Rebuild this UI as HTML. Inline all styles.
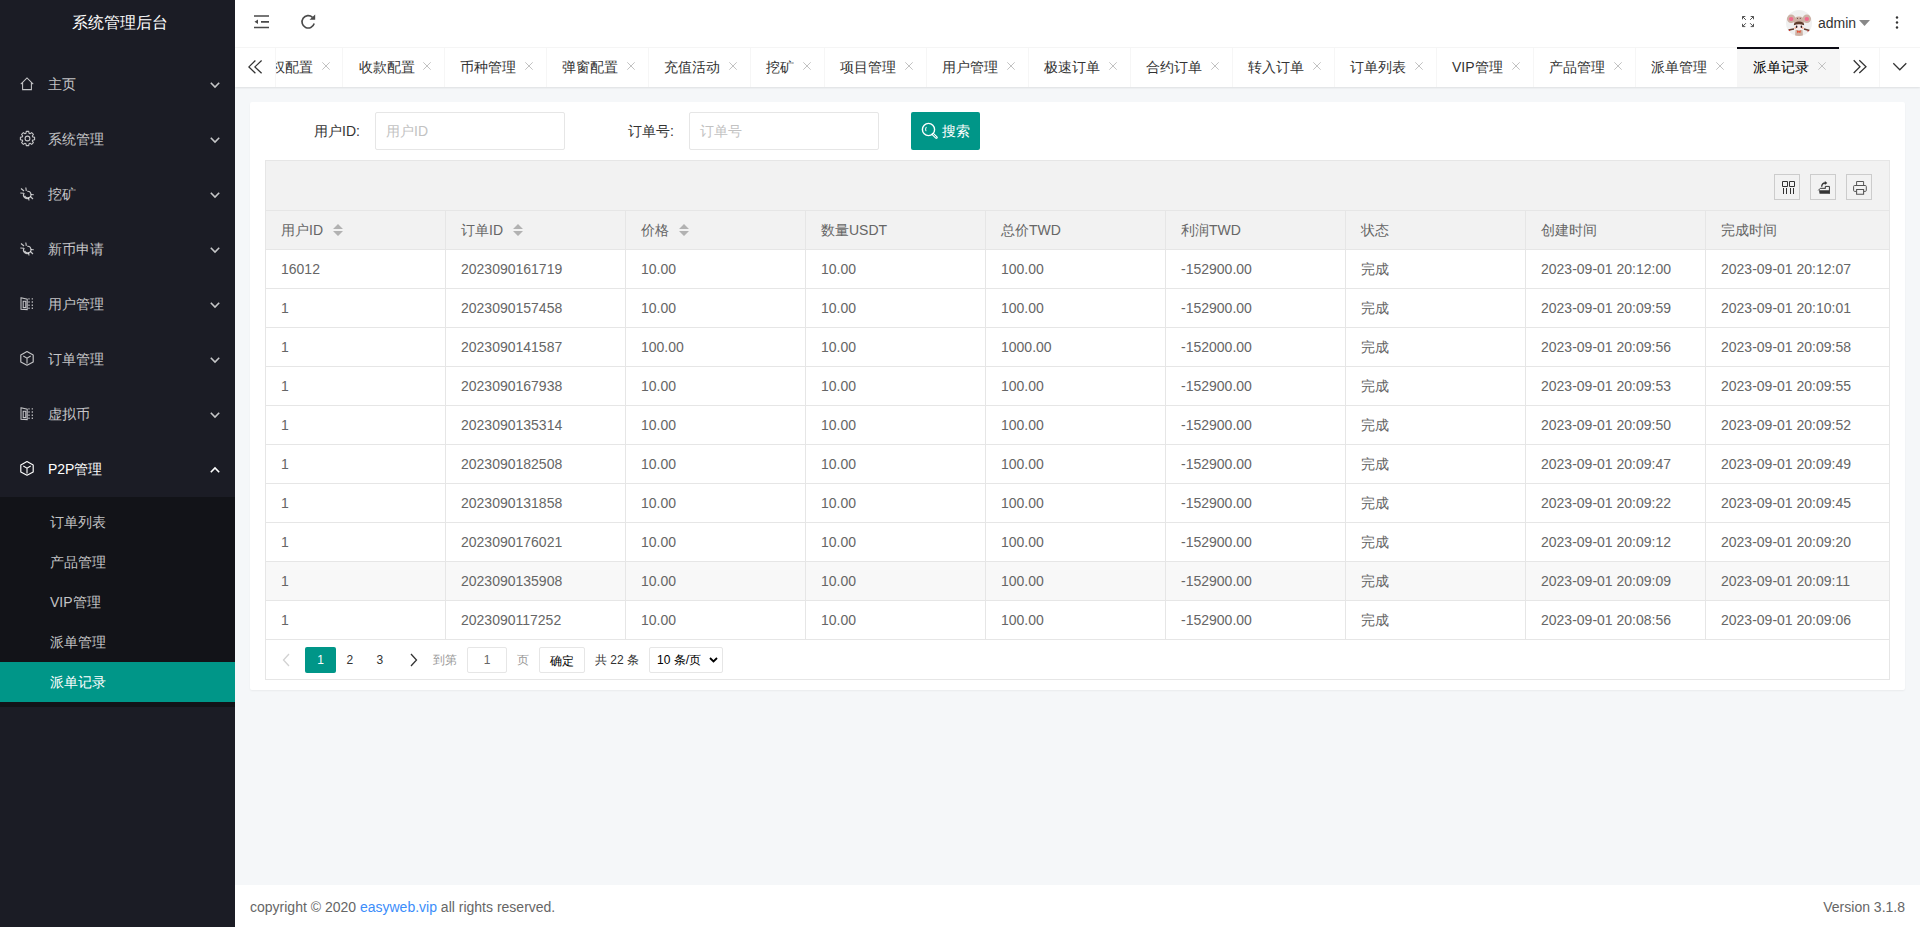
<!DOCTYPE html>
<html><head><meta charset="utf-8"><style>
*{box-sizing:border-box;margin:0;padding:0}
html,body{width:1920px;height:927px;overflow:hidden;background:#f5f7f9;font-family:"Liberation Sans",sans-serif;font-size:14px;color:#666}
div,span{position:absolute}
svg{position:absolute;overflow:visible}
#side{left:0;top:0;width:235px;height:927px;background:#1b1c25}
#logo{left:0;top:0;width:240px;height:47px;line-height:45px;text-align:center;color:#fff;font-size:16px}
.nav{left:0;width:235px;height:55px;color:rgba(255,255,255,.75)}
.nav .t{left:48px;top:0;line-height:55px;white-space:nowrap}
.nav.open{color:#fff}
#sub{left:0;top:497px;width:235px;height:210px;background:#121318}
.si{left:0;width:235px;height:40px;line-height:40px;padding-left:50px;color:rgba(255,255,255,.75);white-space:nowrap}
.si.on{background:#009688;color:#fff}
#hdr{left:235px;top:0;width:1685px;height:48px;background:#fff;border-bottom:1px solid #f6f6f6}
#tabs{left:235px;top:48px;width:1685px;height:39px;background:#fff;box-shadow:0 1px 2px 0 rgba(0,0,0,.1)}
.tab{top:0;height:39px;line-height:39px;border-right:1px solid #f6f6f6;color:#333;white-space:nowrap;overflow:hidden}
.tab .tt{left:15px;top:0}
.tab.on{background:#f6f6f6;color:#000}
#card{left:250px;top:102px;width:1655px;height:588px;background:#fff;border-radius:2px;box-shadow:0 1px 2px 0 rgba(0,0,0,.05)}
.lbl{color:#333;line-height:38px;top:112px;white-space:nowrap}
.inp{top:112px;width:190px;height:38px;border:1px solid #e6e6e6;border-radius:2px;padding-left:10px;line-height:36px;color:#c2c2c2;background:#fff;white-space:nowrap}
#btn{left:911px;top:112px;width:69px;height:38px;background:#009688;border-radius:2px;color:#fff;line-height:38px}
#tbl{left:265px;top:160px;width:1625px;height:520px;border:1px solid #e6e6e6;background:#fff}
#tool{left:0;top:0;width:1623px;height:50px;background:#f2f2f2;border-bottom:1px solid #e6e6e6}
.tb{top:13px;width:26px;height:26px;border:1px solid #ccc}
.row{left:0;width:1623px;height:39px;border-bottom:1px solid #e6e6e6}
.row.h{background:#f2f2f2}
.row.hv{background:#f8f8f8}
.c{top:0;height:38px;line-height:38px;padding-left:15px;border-right:1px solid #e6e6e6;white-space:nowrap;color:#666}
#pg{left:0;top:479px;width:1623px;height:39px;font-size:12px}
#foot{left:235px;top:885px;width:1685px;height:42px;background:#fff;line-height:42px;color:#666;white-space:nowrap}
</style></head><body>
<div id="side">
<div id="logo">系统管理后台</div>
<div class="nav" style="top:57px">
<svg style="left:20px;top:20px" width="15" height="15" viewBox="0 0 15 15"><path d="M0.8 7.2 L7 1 L13.2 7.2 M2.6 5.6 V12.6 H11.4 V5.6" fill="none" stroke="currentColor" stroke-width="1.05"/></svg>
<span class="t">主页</span>
<svg style="left:210px;top:25px" width="10" height="6" viewBox="0 0 10 6"><path d="M0.8 0.8 L5 5 L9.2 0.8" fill="none" stroke="currentColor" stroke-width="1.6"/></svg>
</div>
<div class="nav" style="top:112px">
<svg style="left:19.5px;top:19px" width="15" height="15" viewBox="0 0 15 15"><circle cx="7.5" cy="7.5" r="2.4" fill="none" stroke="currentColor" stroke-width="1.1"/><path d="M12.66 5.90 L14.60 6.28 L14.60 8.72 L12.66 9.10 L12.28 10.02 L13.38 11.66 L11.66 13.38 L10.02 12.28 L9.10 12.66 L8.72 14.60 L6.28 14.60 L5.90 12.66 L4.98 12.28 L3.34 13.38 L1.62 11.66 L2.72 10.02 L2.34 9.10 L0.40 8.72 L0.40 6.28 L2.34 5.90 L2.72 4.98 L1.62 3.34 L3.34 1.62 L4.98 2.72 L5.90 2.34 L6.28 0.40 L8.72 0.40 L9.10 2.34 L10.02 2.72 L11.66 1.62 L13.38 3.34 L12.28 4.98 Z" fill="none" stroke="currentColor" stroke-width="1.1" stroke-linejoin="round"/></svg>
<span class="t">系统管理</span>
<svg style="left:210px;top:25px" width="10" height="6" viewBox="0 0 10 6"><path d="M0.8 0.8 L5 5 L9.2 0.8" fill="none" stroke="currentColor" stroke-width="1.6"/></svg>
</div>
<div class="nav" style="top:167px">
<svg style="left:20px;top:19.5px" width="15" height="15" viewBox="0 0 15 15"><path d="M7.2 4.3 A3.3 3.3 0 1 1 4.6 8.8 M4.3 6.2 A3.3 3.3 0 0 0 9.5 10.3" fill="none" stroke="currentColor" stroke-width="1.15"/><path d="M1 1.5 L4 4 M5.8 0.5 L6.3 3.8 M0.3 6 L3.8 6.3 M8.5 10.5 L9 13.5 M10.3 9.5 L13 12 M10.8 7.5 L13.8 7.8" fill="none" stroke="currentColor" stroke-width="1.15"/></svg>
<span class="t">挖矿</span>
<svg style="left:210px;top:25px" width="10" height="6" viewBox="0 0 10 6"><path d="M0.8 0.8 L5 5 L9.2 0.8" fill="none" stroke="currentColor" stroke-width="1.6"/></svg>
</div>
<div class="nav" style="top:222px">
<svg style="left:20px;top:19.5px" width="15" height="15" viewBox="0 0 15 15"><path d="M7.2 4.3 A3.3 3.3 0 1 1 4.6 8.8 M4.3 6.2 A3.3 3.3 0 0 0 9.5 10.3" fill="none" stroke="currentColor" stroke-width="1.15"/><path d="M1 1.5 L4 4 M5.8 0.5 L6.3 3.8 M0.3 6 L3.8 6.3 M8.5 10.5 L9 13.5 M10.3 9.5 L13 12 M10.8 7.5 L13.8 7.8" fill="none" stroke="currentColor" stroke-width="1.15"/></svg>
<span class="t">新币申请</span>
<svg style="left:210px;top:25px" width="10" height="6" viewBox="0 0 10 6"><path d="M0.8 0.8 L5 5 L9.2 0.8" fill="none" stroke="currentColor" stroke-width="1.6"/></svg>
</div>
<div class="nav" style="top:277px">
<svg style="left:20px;top:19.8px" width="15" height="15" viewBox="0 0 15 15"><path d="M1 0.8 L7.2 2.2 V12.6 L1 12.2 Z M3.2 4.2 H5.8 V10.6 H3.2 Z" fill="none" stroke="currentColor" stroke-width="1.05"/><path d="M9 1.2 V2.6 M9 4.2 V5.8 M9 7.4 V9 M9 10.6 V12 M12.3 1.2 V2.6 M12.3 4.2 V5.8 M12.3 7.4 V9 M12.3 10.6 V12" fill="none" stroke="currentColor" stroke-width="1.2"/></svg>
<span class="t">用户管理</span>
<svg style="left:210px;top:25px" width="10" height="6" viewBox="0 0 10 6"><path d="M0.8 0.8 L5 5 L9.2 0.8" fill="none" stroke="currentColor" stroke-width="1.6"/></svg>
</div>
<div class="nav" style="top:332px">
<svg style="left:20px;top:18.6px" width="15" height="15" viewBox="0 0 15 15"><path d="M7 0.6 L13.2 3.9 V10.9 L7 14.2 L0.8 10.9 V3.9 Z" fill="none" stroke="currentColor" stroke-width="1.15" stroke-linejoin="round"/><path d="M3.3 5 L7 7.2 L10.7 5 M7 7.2 V12.4" fill="none" stroke="currentColor" stroke-width="1.1"/></svg>
<span class="t">订单管理</span>
<svg style="left:210px;top:25px" width="10" height="6" viewBox="0 0 10 6"><path d="M0.8 0.8 L5 5 L9.2 0.8" fill="none" stroke="currentColor" stroke-width="1.6"/></svg>
</div>
<div class="nav" style="top:387px">
<svg style="left:20px;top:19.8px" width="15" height="15" viewBox="0 0 15 15"><path d="M1 0.8 L7.2 2.2 V12.6 L1 12.2 Z M3.2 4.2 H5.8 V10.6 H3.2 Z" fill="none" stroke="currentColor" stroke-width="1.05"/><path d="M9 1.2 V2.6 M9 4.2 V5.8 M9 7.4 V9 M9 10.6 V12 M12.3 1.2 V2.6 M12.3 4.2 V5.8 M12.3 7.4 V9 M12.3 10.6 V12" fill="none" stroke="currentColor" stroke-width="1.2"/></svg>
<span class="t">虚拟币</span>
<svg style="left:210px;top:25px" width="10" height="6" viewBox="0 0 10 6"><path d="M0.8 0.8 L5 5 L9.2 0.8" fill="none" stroke="currentColor" stroke-width="1.6"/></svg>
</div>
<div class="nav open" style="top:442px">
<svg style="left:20px;top:18.6px" width="15" height="15" viewBox="0 0 15 15"><path d="M7 0.6 L13.2 3.9 V10.9 L7 14.2 L0.8 10.9 V3.9 Z" fill="none" stroke="currentColor" stroke-width="1.15" stroke-linejoin="round"/><path d="M3.3 5 L7 7.2 L10.7 5 M7 7.2 V12.4" fill="none" stroke="currentColor" stroke-width="1.1"/></svg>
<span class="t">P2P管理</span>
<svg style="left:210px;top:25px" width="10" height="6" viewBox="0 0 10 6"><path d="M0.8 5.2 L5 1 L9.2 5.2" fill="none" stroke="currentColor" stroke-width="1.6"/></svg>
</div>
</div>
<div id="sub">
<div class="si" style="top:5px">订单列表</div>
<div class="si" style="top:45px">产品管理</div>
<div class="si" style="top:85px">VIP管理</div>
<div class="si" style="top:125px">派单管理</div>
<div class="si on" style="top:165px">派单记录</div>
</div>
<div id="hdr">
<svg style="left:19px;top:15px" width="16" height="14" viewBox="0 0 16 14"><path d="M0 1 H15 M7 6.8 H15 M0 12.5 H15" stroke="#4a4a4a" stroke-width="1.7"/><path d="M0.5 6.8 L4 4.5 V9.1 Z" fill="#4a4a4a"/></svg>
<svg style="left:66px;top:14px" width="16" height="16" viewBox="0 0 16 16"><path d="M13.2 9.5 A6.2 6.2 0 1 1 11.5 3.3" fill="none" stroke="#4a4a4a" stroke-width="1.6"/><path d="M8.5 5.8 L14.2 5.8 L14.2 0.5 Z" fill="#4a4a4a"/></svg>
<svg style="left:1506px;top:15px" width="14" height="14" viewBox="0 0 14 14"><path d="M1.5 4.3 V1.5 H4.3 M1.5 1.5 L4.9 4.9 M12.5 4.3 V1.5 H9.7 M12.5 1.5 L9.1 4.9 M1.5 8.8 V11.6 H4.3 M1.5 11.6 L4.9 8.2 M12.5 8.8 V11.6 H9.7 M12.5 11.6 L9.1 8.2" fill="none" stroke="#555" stroke-width="1"/></svg>
<div style="left:1551px;top:10px;width:26px;height:26px;border-radius:50%;overflow:hidden"><svg style="left:0;top:0" width="26" height="26" viewBox="0 0 26 26"><g><rect width="26" height="26" fill="#f0f0f0"/><path d="M9.5 20 H16.5 L17 26 H9 Z" fill="#cdb2a5"/><circle cx="5.1" cy="8.8" r="4.2" fill="#cdb2a5"/><circle cx="20.9" cy="8.8" r="4.2" fill="#cdb2a5"/><ellipse cx="5.2" cy="9" rx="2.2" ry="1.9" fill="#f26a8e"/><ellipse cx="20.8" cy="9" rx="2.2" ry="1.9" fill="#f26a8e"/><ellipse cx="13" cy="11" rx="5.6" ry="4.6" fill="#cdb2a5"/><circle cx="11.5" cy="8.3" r="0.6" fill="#6b4a3e"/><circle cx="14.3" cy="8.3" r="0.6" fill="#6b4a3e"/><ellipse cx="13" cy="16.6" rx="4.4" ry="3.4" fill="#f8ecec"/><path d="M7.8 15.2 Q8 11.6 13 11.6 Q18 11.6 18.2 15.2 Q13 13.4 7.8 15.2 Z" fill="#5e3b2c"/><ellipse cx="10.6" cy="16.8" rx="0.8" ry="1.2" fill="#2a1a1a"/><ellipse cx="15.4" cy="16.8" rx="0.8" ry="1.2" fill="#2a1a1a"/><circle cx="9.3" cy="17.9" r="0.9" fill="#f5a58a"/><circle cx="16.7" cy="17.9" r="0.9" fill="#f5a58a"/><path d="M10.8 20.2 L12.9 21.5 L15 20.2 L14.2 23.2 L12.9 22 L11.6 23.2 Z" fill="#ea4528"/><path d="M2.5 20 L8 19 M23.5 20.5 L18 19" stroke="#5e3b2c" stroke-width="1.3"/><circle cx="3.6" cy="20.2" r="0.7" fill="#d9302a"/><circle cx="22" cy="21" r="0.7" fill="#d9302a"/></g></svg></div>
<span style="left:1583px;top:1px;line-height:45px;color:#333">admin</span>
<svg style="left:1624px;top:20px" width="11" height="6" viewBox="0 0 11 6"><path d="M0 0 H11 L5.5 6 Z" fill="#888"/></svg>
<svg style="left:1660px;top:16px" width="4" height="13" viewBox="0 0 4 13"><circle cx="2" cy="1.5" r="1.2" fill="#333"/><circle cx="2" cy="6.5" r="1.2" fill="#333"/><circle cx="2" cy="11.5" r="1.2" fill="#333"/></svg>
</div>
<div id="tabs">
<svg style="left:0;top:0" width="40" height="39" viewBox="0 0 40 39"><path d="M20.4 12.5 L13.9 18.9 L20.4 25.3 M26.6 12.5 L19.9 18.9 L26.6 25.3" fill="none" stroke="#333" stroke-width="1.25"/></svg>
<div style="left:40px;top:0;width:68px;height:39px;overflow:hidden;border-right:1px solid #f6f6f6">
<span style="left:-4.5px;top:0;line-height:39px;color:#333;white-space:nowrap">权配置</span>
<svg style="left:47px;top:14px" width="8" height="8" viewBox="0 0 8 8"><path d="M0.3 0.3 L7.7 7.7 M7.7 0.3 L0.3 7.7" stroke="#c2c2c2" stroke-width="1"/></svg>
</div>
<div style="left:40px;top:0;width:1px;height:39px;background:#f6f6f6"></div>
<div class="tab" style="left:109px;width:101px">
<span class="tt">收款配置</span>
<svg style="left:79px;top:14px" width="8" height="8" viewBox="0 0 8 8"><path d="M0.3 0.3 L7.7 7.7 M7.7 0.3 L0.3 7.7" stroke="#c2c2c2" stroke-width="1"/></svg>
</div>
<div class="tab" style="left:210px;width:102px">
<span class="tt">币种管理</span>
<svg style="left:80px;top:14px" width="8" height="8" viewBox="0 0 8 8"><path d="M0.3 0.3 L7.7 7.7 M7.7 0.3 L0.3 7.7" stroke="#c2c2c2" stroke-width="1"/></svg>
</div>
<div class="tab" style="left:312px;width:102px">
<span class="tt">弹窗配置</span>
<svg style="left:80px;top:14px" width="8" height="8" viewBox="0 0 8 8"><path d="M0.3 0.3 L7.7 7.7 M7.7 0.3 L0.3 7.7" stroke="#c2c2c2" stroke-width="1"/></svg>
</div>
<div class="tab" style="left:414px;width:102px">
<span class="tt">充值活动</span>
<svg style="left:80px;top:14px" width="8" height="8" viewBox="0 0 8 8"><path d="M0.3 0.3 L7.7 7.7 M7.7 0.3 L0.3 7.7" stroke="#c2c2c2" stroke-width="1"/></svg>
</div>
<div class="tab" style="left:516px;width:74px">
<span class="tt">挖矿</span>
<svg style="left:52px;top:14px" width="8" height="8" viewBox="0 0 8 8"><path d="M0.3 0.3 L7.7 7.7 M7.7 0.3 L0.3 7.7" stroke="#c2c2c2" stroke-width="1"/></svg>
</div>
<div class="tab" style="left:590px;width:102px">
<span class="tt">项目管理</span>
<svg style="left:80px;top:14px" width="8" height="8" viewBox="0 0 8 8"><path d="M0.3 0.3 L7.7 7.7 M7.7 0.3 L0.3 7.7" stroke="#c2c2c2" stroke-width="1"/></svg>
</div>
<div class="tab" style="left:692px;width:102px">
<span class="tt">用户管理</span>
<svg style="left:80px;top:14px" width="8" height="8" viewBox="0 0 8 8"><path d="M0.3 0.3 L7.7 7.7 M7.7 0.3 L0.3 7.7" stroke="#c2c2c2" stroke-width="1"/></svg>
</div>
<div class="tab" style="left:794px;width:102px">
<span class="tt">极速订单</span>
<svg style="left:80px;top:14px" width="8" height="8" viewBox="0 0 8 8"><path d="M0.3 0.3 L7.7 7.7 M7.7 0.3 L0.3 7.7" stroke="#c2c2c2" stroke-width="1"/></svg>
</div>
<div class="tab" style="left:896px;width:102px">
<span class="tt">合约订单</span>
<svg style="left:80px;top:14px" width="8" height="8" viewBox="0 0 8 8"><path d="M0.3 0.3 L7.7 7.7 M7.7 0.3 L0.3 7.7" stroke="#c2c2c2" stroke-width="1"/></svg>
</div>
<div class="tab" style="left:998px;width:102px">
<span class="tt">转入订单</span>
<svg style="left:80px;top:14px" width="8" height="8" viewBox="0 0 8 8"><path d="M0.3 0.3 L7.7 7.7 M7.7 0.3 L0.3 7.7" stroke="#c2c2c2" stroke-width="1"/></svg>
</div>
<div class="tab" style="left:1100px;width:102px">
<span class="tt">订单列表</span>
<svg style="left:80px;top:14px" width="8" height="8" viewBox="0 0 8 8"><path d="M0.3 0.3 L7.7 7.7 M7.7 0.3 L0.3 7.7" stroke="#c2c2c2" stroke-width="1"/></svg>
</div>
<div class="tab" style="left:1202px;width:97px">
<span class="tt">VIP管理</span>
<svg style="left:75px;top:14px" width="8" height="8" viewBox="0 0 8 8"><path d="M0.3 0.3 L7.7 7.7 M7.7 0.3 L0.3 7.7" stroke="#c2c2c2" stroke-width="1"/></svg>
</div>
<div class="tab" style="left:1299px;width:102px">
<span class="tt">产品管理</span>
<svg style="left:80px;top:14px" width="8" height="8" viewBox="0 0 8 8"><path d="M0.3 0.3 L7.7 7.7 M7.7 0.3 L0.3 7.7" stroke="#c2c2c2" stroke-width="1"/></svg>
</div>
<div class="tab" style="left:1401px;width:102px">
<span class="tt">派单管理</span>
<svg style="left:80px;top:14px" width="8" height="8" viewBox="0 0 8 8"><path d="M0.3 0.3 L7.7 7.7 M7.7 0.3 L0.3 7.7" stroke="#c2c2c2" stroke-width="1"/></svg>
</div>
<div class="tab on" style="left:1503px;width:102px">
<span class="tt">派单记录</span>
<svg style="left:80px;top:14px" width="8" height="8" viewBox="0 0 8 8"><path d="M0.3 0.3 L7.7 7.7 M7.7 0.3 L0.3 7.7" stroke="#c2c2c2" stroke-width="1"/></svg>
</div>
<div style="left:1502px;top:-1px;width:102px;height:2px;background:#0b0b14"></div>
<svg style="left:1600px;top:0" width="85" height="39" viewBox="1600 0 85 39"><path d="M1618.7 12.3 L1625 18.7 L1618.7 25 M1624.3 12.3 L1631 18.7 L1624.3 25" fill="none" stroke="#333" stroke-width="1.25"/><path d="M1658.3 15.2 L1664.8 21.8 L1671.3 15.2" fill="none" stroke="#333" stroke-width="1.25"/></svg>
<div style="left:1644px;top:0;width:1px;height:39px;background:#f6f6f6"></div>
</div>
<div id="card"></div>
<span class="lbl" style="left:314px">用户ID:</span>
<div class="inp" style="left:375px">用户ID</div>
<span class="lbl" style="left:628px">订单号:</span>
<div class="inp" style="left:689px">订单号</div>
<div id="btn"><svg style="left:10px;top:10px" width="17" height="17" viewBox="0 0 17 17"><circle cx="7.5" cy="7.5" r="6.1" fill="none" stroke="#fff" stroke-width="1.4"/><path d="M12 12.2 L15.4 15.6" stroke="#fff" stroke-width="2.8" stroke-linecap="round"/><path d="M12.3 12.5 L15.1 15.3" stroke="#009688" stroke-width="0.9" stroke-linecap="round"/><path d="M5.3 4.9 Q4 7 5 9.2" fill="none" stroke="#fff" stroke-width="1"/></svg><span style="left:31px;top:0">搜索</span></div>
<div id="tbl">
<div id="tool">
<div class="tb" style="left:1508px"></div>
<div class="tb" style="left:1544px"></div>
<div class="tb" style="left:1580px"></div>
<svg style="left:1510px;top:15px" width="22" height="22" viewBox="0 0 22 22"><path d="M6.5 5.5 H11.5 V10.5 H6.5 Z M13.5 5.5 H18.5 V10.5 H13.5 Z" fill="none" stroke="#333" stroke-width="1"/><path d="M7.5 12 V18 M10.5 12 V18 M14.5 12 V18 M17.5 12 V18" stroke="#333" stroke-width="1"/></svg>
<svg style="left:1546px;top:15px" width="22" height="22" viewBox="0 0 22 22"><path d="M7 14.2 H17.4 V17.8 H7.6 Z" fill="#333"/><path d="M6.3 14.4 L8.3 12.3 H13.5" fill="none" stroke="#333" stroke-width="1"/><path d="M13.3 12.6 V10.4 H17.4 V17.8" fill="none" stroke="#333" stroke-width="1"/><path d="M9.7 10.8 Q9.7 7 13.2 7" fill="none" stroke="#333" stroke-width="1.3"/><path d="M12.8 4.9 L15.3 7 L12.8 9.1 Z" fill="#333"/></svg>
<svg style="left:1582px;top:15px" width="22" height="22" viewBox="0 0 22 22"><path d="M8.6 9 V5.5 H15.6 V9" fill="none" stroke="#555" stroke-width="1"/><path d="M8.2 15.4 H6.6 Q5.6 15.4 5.6 14.4 V10.5 Q5.6 9.5 6.6 9.5 H17.3 Q18.3 9.5 18.3 10.5 V14.4 Q18.3 15.4 17.3 15.4 H16" fill="none" stroke="#555" stroke-width="1"/><path d="M8.6 13.4 H15.6 V18.2 H8.6 Z" fill="none" stroke="#555" stroke-width="1.05"/></svg>
</div>
<div class="row h" style="top:50px"><div class="c" style="left:0px;width:180px;">用户ID</div><div class="c" style="left:180px;width:180px;">订单ID</div><div class="c" style="left:360px;width:180px;">价格</div><div class="c" style="left:540px;width:180px;">数量USDT</div><div class="c" style="left:720px;width:180px;">总价TWD</div><div class="c" style="left:900px;width:180px;">利润TWD</div><div class="c" style="left:1080px;width:180px;">状态</div><div class="c" style="left:1260px;width:180px;">创建时间</div><div class="c" style="left:1440px;width:183px;border-right:none;">完成时间</div></div>
<svg style="left:67px;top:63px" width="10" height="12" viewBox="0 0 10 12"><path d="M0 5 L5 0 L10 5 Z M0 7 L5 12 L10 7 Z" fill="#b2b2b2"/></svg>
<svg style="left:247px;top:63px" width="10" height="12" viewBox="0 0 10 12"><path d="M0 5 L5 0 L10 5 Z M0 7 L5 12 L10 7 Z" fill="#b2b2b2"/></svg>
<svg style="left:413px;top:63px" width="10" height="12" viewBox="0 0 10 12"><path d="M0 5 L5 0 L10 5 Z M0 7 L5 12 L10 7 Z" fill="#b2b2b2"/></svg>
<div class="row " style="top:89px"><div class="c" style="left:0px;width:180px;">16012</div><div class="c" style="left:180px;width:180px;">2023090161719</div><div class="c" style="left:360px;width:180px;">10.00</div><div class="c" style="left:540px;width:180px;">10.00</div><div class="c" style="left:720px;width:180px;">100.00</div><div class="c" style="left:900px;width:180px;">-152900.00</div><div class="c" style="left:1080px;width:180px;">完成</div><div class="c" style="left:1260px;width:180px;">2023-09-01 20:12:00</div><div class="c" style="left:1440px;width:183px;border-right:none;">2023-09-01 20:12:07</div></div>
<div class="row " style="top:128px"><div class="c" style="left:0px;width:180px;">1</div><div class="c" style="left:180px;width:180px;">2023090157458</div><div class="c" style="left:360px;width:180px;">10.00</div><div class="c" style="left:540px;width:180px;">10.00</div><div class="c" style="left:720px;width:180px;">100.00</div><div class="c" style="left:900px;width:180px;">-152900.00</div><div class="c" style="left:1080px;width:180px;">完成</div><div class="c" style="left:1260px;width:180px;">2023-09-01 20:09:59</div><div class="c" style="left:1440px;width:183px;border-right:none;">2023-09-01 20:10:01</div></div>
<div class="row " style="top:167px"><div class="c" style="left:0px;width:180px;">1</div><div class="c" style="left:180px;width:180px;">2023090141587</div><div class="c" style="left:360px;width:180px;">100.00</div><div class="c" style="left:540px;width:180px;">10.00</div><div class="c" style="left:720px;width:180px;">1000.00</div><div class="c" style="left:900px;width:180px;">-152000.00</div><div class="c" style="left:1080px;width:180px;">完成</div><div class="c" style="left:1260px;width:180px;">2023-09-01 20:09:56</div><div class="c" style="left:1440px;width:183px;border-right:none;">2023-09-01 20:09:58</div></div>
<div class="row " style="top:206px"><div class="c" style="left:0px;width:180px;">1</div><div class="c" style="left:180px;width:180px;">2023090167938</div><div class="c" style="left:360px;width:180px;">10.00</div><div class="c" style="left:540px;width:180px;">10.00</div><div class="c" style="left:720px;width:180px;">100.00</div><div class="c" style="left:900px;width:180px;">-152900.00</div><div class="c" style="left:1080px;width:180px;">完成</div><div class="c" style="left:1260px;width:180px;">2023-09-01 20:09:53</div><div class="c" style="left:1440px;width:183px;border-right:none;">2023-09-01 20:09:55</div></div>
<div class="row " style="top:245px"><div class="c" style="left:0px;width:180px;">1</div><div class="c" style="left:180px;width:180px;">2023090135314</div><div class="c" style="left:360px;width:180px;">10.00</div><div class="c" style="left:540px;width:180px;">10.00</div><div class="c" style="left:720px;width:180px;">100.00</div><div class="c" style="left:900px;width:180px;">-152900.00</div><div class="c" style="left:1080px;width:180px;">完成</div><div class="c" style="left:1260px;width:180px;">2023-09-01 20:09:50</div><div class="c" style="left:1440px;width:183px;border-right:none;">2023-09-01 20:09:52</div></div>
<div class="row " style="top:284px"><div class="c" style="left:0px;width:180px;">1</div><div class="c" style="left:180px;width:180px;">2023090182508</div><div class="c" style="left:360px;width:180px;">10.00</div><div class="c" style="left:540px;width:180px;">10.00</div><div class="c" style="left:720px;width:180px;">100.00</div><div class="c" style="left:900px;width:180px;">-152900.00</div><div class="c" style="left:1080px;width:180px;">完成</div><div class="c" style="left:1260px;width:180px;">2023-09-01 20:09:47</div><div class="c" style="left:1440px;width:183px;border-right:none;">2023-09-01 20:09:49</div></div>
<div class="row " style="top:323px"><div class="c" style="left:0px;width:180px;">1</div><div class="c" style="left:180px;width:180px;">2023090131858</div><div class="c" style="left:360px;width:180px;">10.00</div><div class="c" style="left:540px;width:180px;">10.00</div><div class="c" style="left:720px;width:180px;">100.00</div><div class="c" style="left:900px;width:180px;">-152900.00</div><div class="c" style="left:1080px;width:180px;">完成</div><div class="c" style="left:1260px;width:180px;">2023-09-01 20:09:22</div><div class="c" style="left:1440px;width:183px;border-right:none;">2023-09-01 20:09:45</div></div>
<div class="row " style="top:362px"><div class="c" style="left:0px;width:180px;">1</div><div class="c" style="left:180px;width:180px;">2023090176021</div><div class="c" style="left:360px;width:180px;">10.00</div><div class="c" style="left:540px;width:180px;">10.00</div><div class="c" style="left:720px;width:180px;">100.00</div><div class="c" style="left:900px;width:180px;">-152900.00</div><div class="c" style="left:1080px;width:180px;">完成</div><div class="c" style="left:1260px;width:180px;">2023-09-01 20:09:12</div><div class="c" style="left:1440px;width:183px;border-right:none;">2023-09-01 20:09:20</div></div>
<div class="row hv" style="top:401px"><div class="c" style="left:0px;width:180px;">1</div><div class="c" style="left:180px;width:180px;">2023090135908</div><div class="c" style="left:360px;width:180px;">10.00</div><div class="c" style="left:540px;width:180px;">10.00</div><div class="c" style="left:720px;width:180px;">100.00</div><div class="c" style="left:900px;width:180px;">-152900.00</div><div class="c" style="left:1080px;width:180px;">完成</div><div class="c" style="left:1260px;width:180px;">2023-09-01 20:09:09</div><div class="c" style="left:1440px;width:183px;border-right:none;">2023-09-01 20:09:11</div></div>
<div class="row " style="top:440px"><div class="c" style="left:0px;width:180px;">1</div><div class="c" style="left:180px;width:180px;">2023090117252</div><div class="c" style="left:360px;width:180px;">10.00</div><div class="c" style="left:540px;width:180px;">10.00</div><div class="c" style="left:720px;width:180px;">100.00</div><div class="c" style="left:900px;width:180px;">-152900.00</div><div class="c" style="left:1080px;width:180px;">完成</div><div class="c" style="left:1260px;width:180px;">2023-09-01 20:08:56</div><div class="c" style="left:1440px;width:183px;border-right:none;">2023-09-01 20:09:06</div></div>
<div id="pg">
<svg style="left:16px;top:13px" width="8" height="14" viewBox="0 0 8 14"><path d="M7 1 L1.5 7 L7 13" fill="none" stroke="#d2d2d2" stroke-width="1.3"/></svg>
<div style="left:39px;top:7px;width:31px;height:26px;background:#009688;border-radius:2px;color:#fff;line-height:26px;text-align:center">1</div>
<span style="left:80.6px;top:7px;line-height:26px;color:#333">2</span>
<span style="left:110.6px;top:7px;line-height:26px;color:#333">3</span>
<svg style="left:144px;top:13px" width="8" height="14" viewBox="0 0 8 14"><path d="M1 1 L6.5 7 L1 13" fill="none" stroke="#333" stroke-width="1.3"/></svg>
<span style="left:167px;top:7px;line-height:26px;color:#999">到第</span>
<div style="left:201px;top:7px;width:40px;height:26px;border:1px solid #e6e6e6;border-radius:2px;line-height:24px;text-align:center;color:#666">1</div>
<span style="left:251px;top:7px;line-height:26px;color:#999">页</span>
<div style="left:273px;top:7px;width:46px;height:26px;border:1px solid #e6e6e6;border-radius:2px;line-height:26px;text-align:center;color:#000">确定</div>
<span style="left:329px;top:7px;line-height:26px;color:#333">共 22 条</span>
<div style="left:383px;top:7px;width:74px;height:26px;border:1px solid #e6e6e6;border-radius:2px;line-height:24px;padding-left:7px;color:#000;white-space:nowrap">10 条/页</div>
<svg style="left:443px;top:17px" width="9" height="6" viewBox="0 0 9 6"><path d="M1 1 L4.5 4.5 L8 1" fill="none" stroke="#000" stroke-width="1.8"/></svg>
</div>
</div>
<div id="foot"><span style="left:15px;top:1px">copyright © 2020 <span style="position:static;color:#3c8dfa">easyweb.vip</span> all rights reserved.</span><span style="right:15px;top:1px">Version 3.1.8</span></div>
</body></html>
